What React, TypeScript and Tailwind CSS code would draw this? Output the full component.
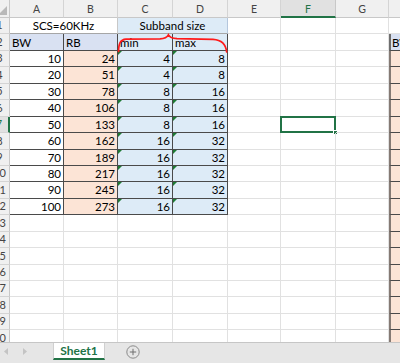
import React from "react";

const COLW = ["w-[54px]", "w-[54px]", "w-[55px]", "w-[55px]", "w-[53px]", "w-[55px]", "w-[53px]"];
const LETTERS = ["A", "B", "C", "D", "E", "F", "G"];

const DATA: [number, number, number, number][] = [
  [10, 24, 4, 8],
  [20, 51, 4, 8],
  [30, 78, 8, 16],
  [40, 106, 8, 16],
  [50, 133, 8, 16],
  [60, 162, 16, 32],
  [70, 189, 16, 32],
  [80, 217, 16, 32],
  [90, 245, 16, 32],
  [100, 273, 16, 32],
];

function RowHead({ label, selected }: { label: number; selected?: boolean }) {
  return (
    <div
      className={
        "w-[20px] -ml-[10px] shrink-0 h-full flex items-center justify-center border-b border-[#d4d4d4] text-[11px] " +
        (selected
          ? "bg-[#e1e1e1] border-r-2 border-r-[#217346] text-[#217346]"
          : "bg-[#f0f0f0] border-r border-r-[#c8c8c8] text-[#444]")
      }
    >
      {label}
    </div>
  );
}

function Tri() {
  return (
    <span className="absolute left-0 top-0 w-0 h-0 border-t-[4px] border-r-[4px] border-t-[#1e7b34] border-r-transparent" />
  );
}

function Cell({
  w,
  cls,
  children,
  tri,
  sel,
}: {
  w: string;
  cls?: string;
  children?: React.ReactNode;
  tri?: boolean;
  sel?: boolean;
}) {
  return (
    <div
      className={
        "relative shrink-0 h-full flex items-center border-r border-b px-[2px] text-[11.5px] text-black whitespace-nowrap overflow-visible " +
        w +
        " " +
        (cls ?? "border-[#e1e1e1]")
      }
    >
      {tri && <Tri />}
      {children}
      {sel && (
        <>
          <span className="absolute -left-[1px] -top-[1px] -right-[1px] -bottom-[1px] border-2 border-[#217346]" />
          <span className="absolute -right-[3px] -bottom-[3px] w-[5px] h-[5px] bg-[#217346] border border-white" />
        </>
      )}
    </div>
  );
}

function Row({ n, children }: { n: number; children: React.ReactNode }) {
  return (
    <div className="flex h-[16.45px] shrink-0">
      <RowHead label={n} selected={n === 7} />
      {children}
    </div>
  );
}

function EmptyCols({ from, row }: { from: number; row: number }) {
  const out = [];
  for (let i = from; i < 7; i++) {
    out.push(<Cell key={i} w={COLW[i]} sel={i === 5 && row === 7} />);
  }
  return <>{out}</>;
}

function HCell({ row }: { row: number }) {
  if (row === 1) return <div className="flex-1 min-w-0 h-full border-b border-[#e1e1e1]" />;
  if (row === 2)
    return (
      <div className="flex-1 min-w-0 h-full flex items-center pl-[1px] bg-[#d9e1f2] border-l-2 border-l-[#6e6e6e] border-b border-b-[#4a4a4a] text-[11.5px] text-black overflow-hidden whitespace-nowrap">
        BW
      </div>
    );
  return <div className="flex-1 min-w-0 h-full bg-[#fce4d6] border-l-2 border-l-[#857a74] border-b border-b-[#4a4a4a]" />;
}

export default function App() {
  const rows: React.ReactNode[] = [];
  const dark = "border-[#4a4a4a]";
  rows.push(
    <Row key={1} n={1}>
      <Cell w="w-[108px]" cls="border-r-[#c8c8c8] border-b-[#a6a6a6] justify-center bg-white">
        SCS=60KHz
      </Cell>
      <Cell w="w-[110px]" cls="border-r-[#b4c6dc] border-b-[#a6a6a6] justify-center bg-[#ddebf7]">
        Subband size
      </Cell>
      <EmptyCols from={4} row={1} />
      <HCell row={1} />
    </Row>
  );
  rows.push(
    <Row key={2} n={2}>
      <Cell w={COLW[0]} cls={dark + " bg-[#d9e1f2]"}>BW</Cell>
      <Cell w={COLW[1]} cls={dark + " bg-[#d9e1f2]"}>RB</Cell>
      <Cell w={COLW[2]} cls={dark + " bg-[#ddebf7]"}>min</Cell>
      <Cell w={COLW[3]} cls={dark + " bg-[#ddebf7]"}>max</Cell>
      <EmptyCols from={4} row={2} />
      <HCell row={2} />
    </Row>
  );
  DATA.forEach((d, i) => {
    const n = i + 3;
    rows.push(
      <Row key={n} n={n}>
        <Cell w={COLW[0]} cls={dark + " bg-white justify-end"}>{d[0]}</Cell>
        <Cell w={COLW[1]} cls={dark + " bg-[#fce4d6] justify-end"}>{d[1]}</Cell>
        <Cell w={COLW[2]} cls={dark + " bg-[#ddebf7] justify-end"} tri>{d[2]}</Cell>
        <Cell w={COLW[3]} cls={dark + " bg-[#ddebf7] justify-end"} tri>{d[3]}</Cell>
        <EmptyCols from={4} row={n} />
        <HCell row={n} />
      </Row>
    );
  });
  for (let n = 13; n <= 20; n++) {
    rows.push(
      <Row key={n} n={n}>
        <EmptyCols from={0} row={n} />
        <HCell row={n} />
      </Row>
    );
  }

  return (
    <div className="w-[400px] h-[363px] overflow-hidden bg-white flex flex-col font-['Lato',sans-serif]">
      <div className="relative h-[342px] shrink-0 overflow-hidden flex flex-col">
        {/* column headers */}
        <div className="flex h-[18px] shrink-0">
          <div className="relative w-[20px] -ml-[10px] shrink-0 h-full bg-[#f0f0f0] border-r border-b border-[#c8c8c8]">
            <svg className="absolute left-[10px] bottom-[2px]" width="8" height="9" viewBox="0 0 8 9">
              <polygon points="7,0 7,9 -2,9" fill="#b9b9b9" />
            </svg>
          </div>
          {LETTERS.map((l, i) => (
            <div
              key={l}
              className={
                "shrink-0 h-full flex items-end justify-center text-[10.5px] leading-[12px] border-r " +
                COLW[i] +
                " " +
                (l === "F"
                  ? "bg-[#e1e1e1] border-r-[#c8c8c8] border-b-2 border-b-[#217346] text-[#217346] pb-[1px]"
                  : "bg-[#f0f0f0] border-r-[#d4d4d4] border-b border-b-[#c8c8c8] text-[#444] pb-[2px]")
              }
            >
              {l}
            </div>
          ))}
          <div className="flex-1 min-w-0 h-full bg-[#f0f0f0] border-b border-[#c8c8c8]" />
        </div>
        {rows}
        {/* red curly brace annotation */}
        <svg className="absolute left-0 top-0 pointer-events-none" width="400" height="60" viewBox="0 0 400 60">
          <path
            d="M118.6 51.5 C118.6 44 120 39.6 126 39.2 L160 38.8 C164 38.6 167 37.5 168.4 34.8 C169.8 37.4 172.5 38.4 177 38.6 L213 39.3 C221 39.8 226 44.5 226.6 52"
            fill="none"
            stroke="#ff1a1a"
            strokeWidth="1.7"
            strokeLinecap="round"
          />
        </svg>
      </div>
      {/* sheet tab bar */}
      <div className="h-[21px] shrink-0 bg-[#e6e6e6] border-t border-[#c6c6c6] flex items-start">
        <div className="w-[53px] h-[17px] shrink-0 flex items-center">
          <svg className="ml-[4px]" width="4" height="7" viewBox="0 0 4 7">
            <polygon points="4,0 4,7 0,3.5" fill="#c4c4c4" />
          </svg>
          <svg className="ml-[15px]" width="4" height="7" viewBox="0 0 4 7">
            <polygon points="0,0 0,7 4,3.5" fill="#c4c4c4" />
          </svg>
        </div>
        <div className="w-[52px] h-[17px] shrink-0 bg-white border-x border-[#d0d0d0] border-b-2 border-b-[#217346] flex items-center justify-center text-[12px] font-bold text-[#217346]">
          Sheet1
        </div>
        <div className="h-[17px] flex items-center ml-[21px]">
          <svg width="14" height="14" viewBox="0 0 14 14">
            <circle cx="7" cy="7" r="6.2" fill="none" stroke="#8a8a8a" strokeWidth="1" />
            <path d="M7 3.8 V10.2 M3.8 7 H10.2" stroke="#6e6e6e" strokeWidth="1" />
          </svg>
        </div>
      </div>
    </div>
  );
}
